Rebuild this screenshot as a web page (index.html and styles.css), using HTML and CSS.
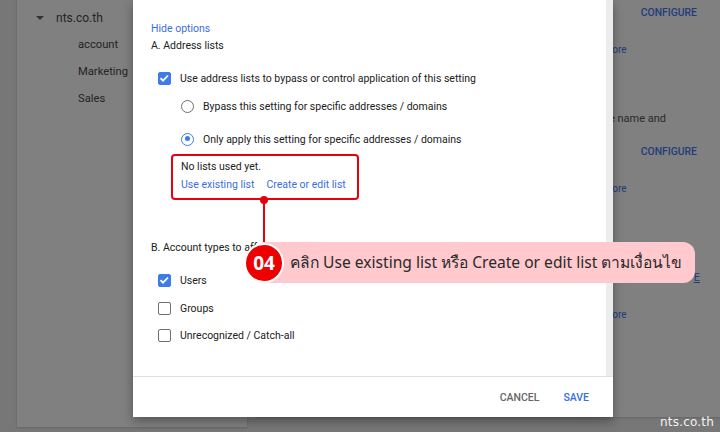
FILE: index.html
```html
<!DOCTYPE html>
<html lang="en">
<head>
  <meta charset="UTF-8">
  <title>Address lists</title>
  <link rel="stylesheet" href="styles.css">
</head>
<body>
  <div class="screen">
    <!-- Org unit tree (dimmed) -->
    <div class="side-card">
      <div class="org root"><span class="caret"></span>nts.co.th</div>
      <div class="org">account</div>
      <div class="org">Marketing</div>
      <div class="org">Sales</div>
    </div>

    <!-- Settings card behind the dialog (dimmed) -->
    <div class="main-card">
      <div class="bg-col">
        <div class="bg-row r1"><span class="cfg">CONFIGURE</span></div>
        <div class="bg-row r2"><span class="more">Learn more</span></div>
        <div class="bg-row r3"><span class="plain">Enter the name and</span></div>
        <div class="bg-row r4"><span class="cfg">CONFIGURE</span></div>
        <div class="bg-row r5"><span class="more">Learn more</span></div>
        <div class="bg-row r6"><span class="edit">E</span></div>
        <div class="bg-row r7"><span class="more">Learn more</span></div>
      </div>
    </div>

    <!-- Dialog -->
    <div class="dialog">
      <div class="dialog-body">
        <div class="dialog-content">
          <a class="link hide-opt">Hide options</a>
          <div class="section a-title">A. Address lists</div>

          <div class="row check-row use-row">
            <span class="cb on"><svg viewBox="0 0 14 14"><path d="M2.8 7.2l2.8 2.8 5.6-5.8" /></svg></span>
            Use address lists to bypass or control application of this setting
          </div>
          <div class="row radio-row bypass-row">
            <span class="radio"></span>
            Bypass this setting for specific addresses / domains
          </div>
          <div class="row radio-row only-row">
            <span class="radio on"></span>
            Only apply this setting for specific addresses / domains
          </div>

          <div class="lists-box">
            <div class="line">No lists used yet.</div>
            <div class="line links"><a class="link">Use existing list</a><a class="link">Create or edit list</a></div>
          </div>

          <div class="section b-title">B. Account types to affect</div>

          <div class="row check-row users-row">
            <span class="cb on"><svg viewBox="0 0 14 14"><path d="M2.8 7.2l2.8 2.8 5.6-5.8" /></svg></span>
            Users
          </div>
          <div class="row check-row groups-row">
            <span class="cb"></span>
            Groups
          </div>
          <div class="row check-row unrec-row">
            <span class="cb"></span>
            Unrecognized / Catch-all
          </div>
        </div>
        <div class="scrollbar"></div>
      </div>
      <div class="dialog-footer">
        <button class="btn cancel">CANCEL</button>
        <button class="btn save">SAVE</button>
      </div>
    </div>

    <!-- Annotation -->
    <div class="pointer"></div>
    <div class="callout">
      <span class="step">04</span>
      <span class="callout-text">คลิก Use existing list หรือ Create or edit list ตามเงื่อนไข</span>
    </div>

    <div class="watermark">nts.co.th</div>
  </div>
</body>
</html>
```

FILE: styles.css
```css
/* Page */
body {
  margin: 0;
  font-family: Roboto, 'Liberation Sans', sans-serif;
}

.screen {
  position: relative;
  width: 720px;
  height: 432px;
  overflow: hidden;
  background: #777;
  display: flex;
  align-items: flex-start;
  gap: 10px;
  padding-left: 17px;
  box-sizing: border-box;
}

/* Dimmed cards */
.side-card {
  width: 230px;
  height: 427px;
  background: #808080;
  box-shadow: -1px 0 0 #6e6e6e, 0 1px 2px #666;
  padding-top: 10px;
  box-sizing: border-box;
  flex-shrink: 0;
}

.org {
  height: 27px;
  line-height: 16px;
  font-size: 11.2px;
  color: #242424;
  padding-left: 61px;
}

.org.root {
  display: flex;
  align-items: flex-start;
  padding-left: 19px;
  font-size: 12px;
}

.caret {
  width: 0;
  height: 0;
  border-left: 4px solid transparent;
  border-right: 4px solid transparent;
  border-top: 4px solid #333;
  margin: 6px 12px 0 0;
}

.main-card {
  flex: 1;
  height: 417px;
  background: #808080;
  box-shadow: 0 1px 2px #666;
}

.bg-col {
  margin-left: 303px;
  width: 137px;
  padding-top: 5px;
  font-size: 11px;
}

.bg-row {
  height: 16px;
  line-height: 16px;
}

.r2 { margin-top: 21px; }
.r3 { margin-top: 53px; }
.r4 { margin-top: 17px; }
.r5 { margin-top: 21px; }
.r6 { margin-top: 73px; }
.r7 { margin-top: 21px; }

.cfg {
  display: block;
  text-align: right;
  font-size: 10.4px;
  font-weight: 500;
  color: #223c7c;
}

.more {
  display: block;
  margin-left: 16px;
  font-size: 10px;
  color: #223c7c;
}

.plain {
  display: block;
  text-align: right;
  padding-right: 31px;
  color: #2a2a2a;
}

.edit {
  display: block;
  text-align: right;
  margin-right: -3px;
  color: #223c7c;
  text-decoration: underline;
}

/* Dialog */
.dialog {
  position: absolute;
  left: 133px;
  top: 0;
  width: 480px;
  height: 417px;
  background: #fff;
  box-shadow: 0 4px 10px rgba(0, 0, 0, 0.35);
  display: flex;
  flex-direction: column;
}

.dialog-body {
  flex: 1;
  display: flex;
  border-bottom: 1px solid #e0e0e0;
}

.dialog-content {
  flex: 1;
  padding: 20px 0 0 18px;
  font-size: 10.5px;
  color: #212121;
}

.scrollbar {
  width: 7px;
  background: #ececec;
}

.link {
  color: #3b6fd8;
  cursor: pointer;
}

.hide-opt {
  display: block;
  line-height: 16px;
  margin-top: 1px;
}

.section {
  line-height: 18px;
}

.a-title { margin-top: 0; }
.b-title { margin-top: 39px; }

.row {
  display: flex;
  align-items: center;
  height: 20px;
}

.check-row { padding-left: 7px; }
.radio-row { padding-left: 30px; }

.use-row { margin-top: 13px; }
.bypass-row { margin-top: 8px; }
.only-row { margin-top: 13px; }
.users-row { margin-top: 13px; }
.groups-row { margin-top: 8px; }
.unrec-row { margin-top: 7px; }

.cb {
  width: 13px;
  height: 13px;
  border: 1.5px solid #707070;
  border-radius: 2px;
  box-sizing: border-box;
  margin-right: 9px;
  display: flex;
}

.cb.on {
  background: #3d7be6;
  border-color: #3d7be6;
}

.cb svg {
  width: 14px;
  height: 14px;
  margin: -2px 0 0 -1.5px;
}

.cb svg path {
  fill: none;
  stroke: #fff;
  stroke-width: 2;
}

.radio {
  width: 13px;
  height: 13px;
  border: 1.5px solid #707070;
  border-radius: 50%;
  box-sizing: border-box;
  margin-right: 9px;
  position: relative;
}

.radio.on {
  border-color: #3d7be6;
}

.radio.on::after {
  content: '';
  position: absolute;
  left: 2.5px;
  top: 2.5px;
  width: 5px;
  height: 5px;
  border-radius: 50%;
  background: #3d7be6;
}

.lists-box {
  margin: 5px 0 0 20px;
  width: 188px;
  height: 46px;
  border: 2px solid #e8000f;
  border-radius: 4px;
  box-sizing: border-box;
  padding: 2px 0 0 8px;
}

.lists-box .line {
  line-height: 18px;
}

.links {
  display: flex;
  gap: 12px;
}

.dialog-footer {
  height: 39px;
  display: flex;
  align-items: center;
  justify-content: flex-end;
  gap: 24px;
  padding: 1px 24px 0 0;
}

.btn {
  border: none;
  background: none;
  padding: 0;
  font-family: Roboto, 'Liberation Sans', sans-serif;
  font-size: 10.5px;
  font-weight: 500;
  cursor: pointer;
}

.cancel { color: #666; }
.save { color: #3b6fd8; }

/* Annotation */
.pointer {
  position: absolute;
  left: 263px;
  top: 200px;
  width: 2px;
  height: 44px;
  background: #e8000f;
}

.pointer::before {
  content: '';
  position: absolute;
  left: -3px;
  top: -4px;
  width: 8px;
  height: 8px;
  border-radius: 50%;
  background: #e8000f;
}

.callout {
  position: absolute;
  left: 244px;
  top: 242px;
  width: 451px;
  height: 41px;
  display: flex;
  align-items: center;
}

.callout::before {
  content: '';
  position: absolute;
  left: 18px;
  right: 0;
  top: 0;
  bottom: 0;
  background: #ffc9cd;
  border-radius: 0 12px 12px 0;
}

.step {
  position: relative;
  width: 36px;
  height: 36px;
  border-radius: 50%;
  background: #ec0000;
  border: 2px solid #fff;
  color: #fff;
  font-family: 'Open Sans', 'DejaVu Sans', sans-serif;
  font-size: 19px;
  font-weight: 700;
  display: flex;
  align-items: center;
  justify-content: center;
  flex-shrink: 0;
}

.callout-text {
  position: relative;
  margin-left: 6px;
  font-family: 'Noto Sans', 'DejaVu Sans', sans-serif;
  font-size: 15.6px;
  color: #2a2a2a;
  white-space: nowrap;
}

.watermark {
  position: absolute;
  right: 6px;
  bottom: 3px;
  font-family: 'DejaVu Sans', sans-serif;
  font-size: 12px;
  color: #f2f2f2;
  letter-spacing: 0.2px;
}
```
